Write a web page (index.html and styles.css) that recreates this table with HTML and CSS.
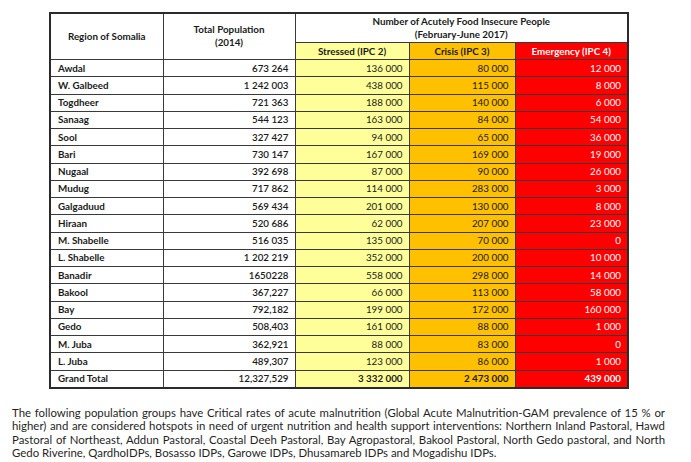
FILE: index.html
```html
<!DOCTYPE html>
<html lang="en">
<head>
<meta charset="utf-8">
<title>Somalia IPC</title>
<link rel="stylesheet" href="styles.css">
</head>
<body>
<div class="page">
  <table class="ipc">
    <colgroup>
      <col class="c1"><col class="c2"><col class="c3"><col class="c4"><col class="c5">
    </colgroup>
    <thead>
      <tr class="h1">
        <th rowspan="2" class="left-h">Region of Somalia</th>
        <th rowspan="2">Total Population<br>(2014)</th>
        <th colspan="3">Number of Acutely Food Insecure People<br>(February-June 2017)</th>
      </tr>
      <tr class="h2">
        <th class="y">Stressed (IPC 2)</th>
        <th class="o">Crisis (IPC 3)</th>
        <th class="r">Emergency (IPC 4)</th>
      </tr>
    </thead>
    <tbody>
      <tr><td class="reg">Awdal</td><td class="pop">673 264</td><td class="y">136 000</td><td class="o">80 000</td><td class="r">12 000</td></tr>
      <tr><td class="reg">W. Galbeed</td><td class="pop">1 242 003</td><td class="y">438 000</td><td class="o">115 000</td><td class="r">8 000</td></tr>
      <tr><td class="reg">Togdheer</td><td class="pop">721 363</td><td class="y">188 000</td><td class="o">140 000</td><td class="r">6 000</td></tr>
      <tr><td class="reg">Sanaag</td><td class="pop">544 123</td><td class="y">163 000</td><td class="o">84 000</td><td class="r">54 000</td></tr>
      <tr><td class="reg">Sool</td><td class="pop">327 427</td><td class="y">94 000</td><td class="o">65 000</td><td class="r">36 000</td></tr>
      <tr><td class="reg">Bari</td><td class="pop">730 147</td><td class="y">167 000</td><td class="o">169 000</td><td class="r">19 000</td></tr>
      <tr><td class="reg">Nugaal</td><td class="pop">392 698</td><td class="y">87 000</td><td class="o">90 000</td><td class="r">26 000</td></tr>
      <tr><td class="reg">Mudug</td><td class="pop">717 862</td><td class="y">114 000</td><td class="o">283 000</td><td class="r">3 000</td></tr>
      <tr><td class="reg">Galgaduud</td><td class="pop">569 434</td><td class="y">201 000</td><td class="o">130 000</td><td class="r">8 000</td></tr>
      <tr><td class="reg">Hiraan</td><td class="pop">520 686</td><td class="y">62 000</td><td class="o">207 000</td><td class="r">23 000</td></tr>
      <tr><td class="reg">M. Shabelle</td><td class="pop">516 035</td><td class="y">135 000</td><td class="o">70 000</td><td class="r">0</td></tr>
      <tr><td class="reg">L. Shabelle</td><td class="pop">1 202 219</td><td class="y">352 000</td><td class="o">200 000</td><td class="r">10 000</td></tr>
      <tr><td class="reg">Banadir</td><td class="pop">1650228</td><td class="y">558 000</td><td class="o">298 000</td><td class="r">14 000</td></tr>
      <tr><td class="reg">Bakool</td><td class="pop">367,227</td><td class="y">66 000</td><td class="o">113 000</td><td class="r">58 000</td></tr>
      <tr><td class="reg">Bay</td><td class="pop">792,182</td><td class="y">199 000</td><td class="o">172 000</td><td class="r">160 000</td></tr>
      <tr><td class="reg">Gedo</td><td class="pop">508,403</td><td class="y">161 000</td><td class="o">88 000</td><td class="r">1 000</td></tr>
      <tr><td class="reg">M. Juba</td><td class="pop">362,921</td><td class="y">88 000</td><td class="o">83 000</td><td class="r">0</td></tr>
      <tr><td class="reg">L. Juba</td><td class="pop">489,307</td><td class="y">123 000</td><td class="o">86 000</td><td class="r">1 000</td></tr>
      <tr class="total"><td class="reg">Grand Total</td><td class="pop">12,327,529</td><td class="y">3 332 000</td><td class="o">2 473 000</td><td class="r">439 000</td></tr>
    </tbody>
  </table>
  <p class="note">The following population groups have Critical rates of acute malnutrition (Global Acute Malnutrition-GAM prevalence of 15 % or higher) and are considered hotspots in need of urgent nutrition and health support interventions: Northern Inland Pastoral, Hawd Pastoral of Northeast, Addun Pastoral, Coastal Deeh Pastoral, Bay Agropastoral, Bakool Pastoral, North Gedo pastoral, and North Gedo Riverine, QardhoIDPs, Bosasso IDPs, Garowe IDPs, Dhusamareb IDPs and Mogadishu IDPs.</p>
</div>
</body>
</html>
```

FILE: styles.css
```css
html, body {
  margin: 0;
  padding: 0;
  background: #ffffff;
}

.page {
  width: 691px;
  height: 462px;
  padding: 12px 0 0 0;
  box-sizing: border-box;
  font-family: Lato, "Open Sans", "Liberation Sans", sans-serif;
  color: #1a1a1a;
}

.ipc {
  margin-left: 49px;
  border-collapse: collapse;
  table-layout: fixed;
  width: 578px;
  border: 2px solid #2b2b2b;
  font-size: 9.8px;
  line-height: 11px;
}

.c1 { width: 113px; }
.c2 { width: 132px; }
.c3 { width: 114px; }
.c4 { width: 106px; }
.c5 { width: 113px; }

.ipc th,
.ipc td {
  border: 1px solid #3a3a3a;
  padding: 0 6px;
  white-space: nowrap;
}

.ipc th {
  font-weight: 700;
  text-align: center;
  vertical-align: middle;
}

.h1 th {
  height: 27px;
  line-height: 13px;
  padding-bottom: 1px;
}

.h2 th {
  height: 16px;
}

.ipc td {
  height: 16.26px;
  text-align: right;
}

.ipc td.reg {
  text-align: left;
  font-weight: 700;
  padding-left: 7px;
}

.ipc td.pop {
  font-weight: 600;
  padding-right: 6px;
}

.y { background: #ffff99; }
.o { background: #ffc000; }
.r { background: #ff0000; color: #ffffff; }

.total td {
  font-weight: 700;
}

.note {
  margin: 17px 26px 0 12px;
  font-size: 11.4px;
  line-height: 13.5px;
  text-align: justify;
  color: #1f1f1f;
}
```
